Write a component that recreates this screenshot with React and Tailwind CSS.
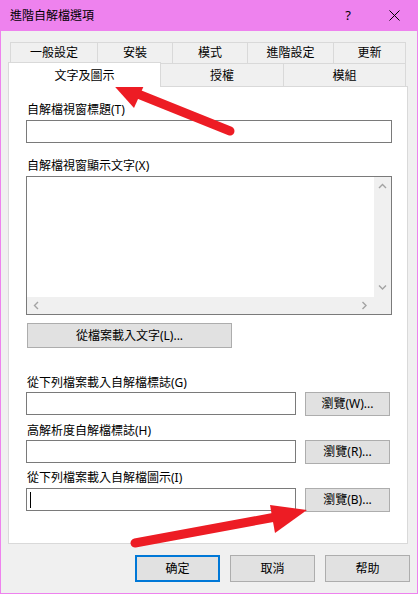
import React from "react";

const font = "font-['Noto_Sans','Noto_Sans_CJK_TC',sans-serif]";

function Chevron({ dir }) {
  const paths = {
    up: "M1 5 L4.5 1.5 L8 5",
    down: "M1 1.5 L4.5 5 L8 1.5",
    left: "M5 1 L1.5 4.5 L5 8",
    right: "M1.5 1 L5 4.5 L1.5 8",
  };
  const vertical = dir === "up" || dir === "down";
  return (
    <svg
      width={vertical ? 9 : 7}
      height={vertical ? 7 : 9}
      viewBox={vertical ? "0 0 9 7" : "0 0 7 9"}
      fill="none"
      stroke="#a3a3a3"
      strokeWidth="1.4"
    >
      <path d={paths[dir]} />
    </svg>
  );
}

function Btn({ children, className = "" }) {
  return (
    <div
      className={`flex items-center justify-center bg-[#e1e1e1] border border-[#adadad] text-[12px] text-black ${className}`}
    >
      {children}
    </div>
  );
}

function Label({ children, className = "" }) {
  return (
    <div className={`h-[16px] leading-[16px] text-[12px] text-black ml-px ${className}`}>
      {children}
    </div>
  );
}

function FileRow({ label, btn, mt, caret }) {
  return (
    <div className="flex items-start gap-[9px] mt-px">
      <div className="w-[270px] h-[23px] bg-white border border-[#7a7a7a] flex items-center pl-[3px]">
        {caret && <div className="w-px h-[16px] bg-black" />}
      </div>
      <Btn className="w-[85px] h-[24px]">{btn}</Btn>
    </div>
  );
}

export default function App() {
  return (
    <div
      className={`${font} relative w-[418px] h-[594px] bg-[#f0f0f0] border-x border-b border-[#ee82ee] flex flex-col overflow-hidden`}
    >
      {/* Title bar */}
      <div className="h-[31px] bg-[#ee82ee] flex items-center shrink-0">
        <div className="pl-[9px] text-[12px] text-black">進階自解檔選項</div>
        <div className="ml-auto flex h-full">
          <div className="w-[46px] h-full flex items-center justify-center text-[13px] text-black">?</div>
          <div className="w-[46px] h-full flex items-center justify-center">
            <svg width="11" height="11" viewBox="0 0 11 11" stroke="#000" strokeWidth="1">
              <path d="M0.5 0.5 L10.5 10.5 M10.5 0.5 L0.5 10.5" />
            </svg>
          </div>
        </div>
      </div>

      <div className="pl-[7px] pr-[9px] mt-[11px]">
        {/* Tabs row 1 */}
        <div className="flex h-[21px] ml-[2px] text-[12px] text-black">
          <div className="w-[87px] border-t border-l border-[#d9d9d9] flex items-center justify-center">一般設定</div>
          <div className="w-[75px] border-t border-l border-[#d9d9d9] flex items-center justify-center">安裝</div>
          <div className="w-[75px] border-t border-l border-[#d9d9d9] flex items-center justify-center">模式</div>
          <div className="w-[86px] border-t border-l border-[#d9d9d9] flex items-center justify-center">進階設定</div>
          <div className="w-[73px] border-t border-x border-[#d9d9d9] flex items-center justify-center">更新</div>
        </div>
        {/* Tabs row 2 */}
        <div className="flex h-[23px] text-[12px] text-black">
          <div className="relative z-10 w-[153px] h-[25px] -mt-px bg-white border-t border-x border-[#d9d9d9] flex items-center justify-center pt-[2px]">
            文字及圖示
          </div>
          <div className="w-[123px] border-t border-r border-[#d9d9d9] flex items-center justify-center pt-[2px]">授權</div>
          <div className="w-[122px] border-t border-r border-[#d9d9d9] flex items-center justify-center pt-[2px]">模組</div>
        </div>

        {/* Panel */}
        <div className="w-[400px] h-[458px] bg-white border border-[#d9d9d9] flex flex-col pt-[15px] pl-[17px]">
          <Label>自解檔視窗標題(T)</Label>
          <div className="mt-[2px] w-[366px] h-[23px] border border-[#7a7a7a] bg-white" />

          <Label className="mt-[15px]">自解檔視窗顯示文字(X)</Label>
          <div className="mt-[2px] w-[366px] h-[139px] border border-[#7a7a7a] bg-white flex flex-col">
            <div className="flex flex-1">
              <div className="flex-1" />
              <div className="w-[17px] bg-[#f0f0f0] flex flex-col items-center justify-between pt-[6px] pb-[6px]">
                <Chevron dir="up" />
                <Chevron dir="down" />
              </div>
            </div>
            <div className="h-[17px] flex">
              <div className="flex-1 bg-[#f0f0f0] flex items-center justify-between pl-[6px] pr-[6px]">
                <Chevron dir="left" />
                <Chevron dir="right" />
              </div>
              <div className="w-[17px] bg-[#f0f0f0]" />
            </div>
          </div>

          <Btn className="mt-[8px] ml-px w-[205px] h-[25px]">從檔案載入文字(L)...</Btn>

          <Label className="mt-[27px]">從下列檔案載入自解檔標誌(G)</Label>
          <FileRow btn="瀏覽(W)..." />

          <Label className="mt-[7px]">高解析度自解檔標誌(H)</Label>
          <FileRow btn="瀏覽(R)..." />

          <Label className="mt-[6px]">從下列檔案載入自解檔圖示(I)</Label>
          <div className="mt-px">
            <FileRow btn="瀏覽(B)..." caret />
          </div>
        </div>
      </div>

      {/* Bottom buttons */}
      <div className="flex justify-end gap-[10px] pr-[7px] mt-[11px]">
        <div className="w-[85px] h-[27px] flex items-center justify-center bg-[#e1e1e1] border-2 border-[#0078d7] text-[12px] text-black">
          确定
        </div>
        <Btn className="w-[85px] h-[27px]">取消</Btn>
        <Btn className="w-[85px] h-[27px]">帮助</Btn>
      </div>

      {/* Red annotation arrows */}
      <svg
        className="absolute left-0 top-0 pointer-events-none"
        width="418"
        height="594"
        viewBox="0 0 418 594"
      >
        <line x1="229" y1="131" x2="132" y2="92" stroke="#ed1c24" strokeWidth="9" strokeLinecap="round" />
        <polygon points="107,79 145,81 133,108" fill="#ed1c24" />
        <line x1="134" y1="543" x2="280" y2="516" stroke="#ed1c24" strokeWidth="9" strokeLinecap="round" />
        <polygon points="306,510 269,505 274,533" fill="#ed1c24" />
      </svg>
    </div>
  );
}
